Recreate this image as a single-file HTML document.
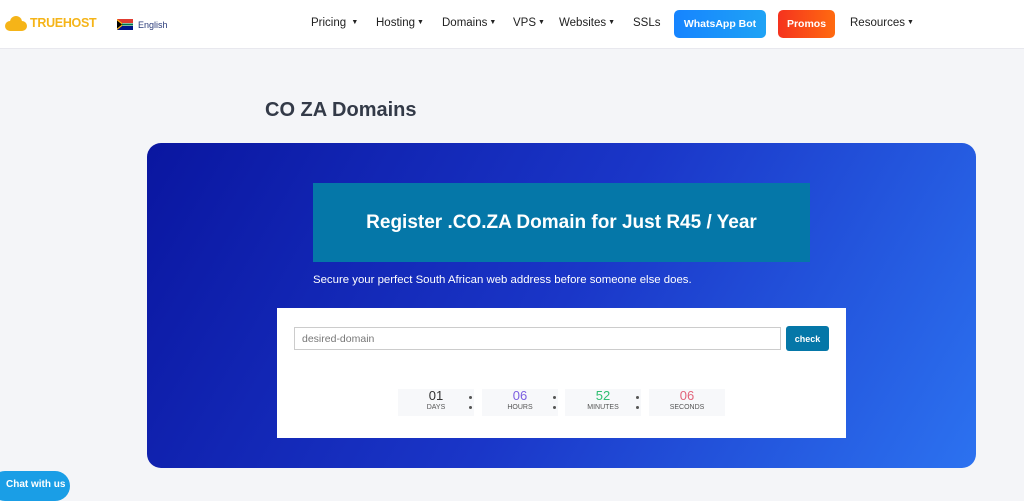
<!DOCTYPE html>
<html><head><meta charset="utf-8"><style>
*{margin:0;padding:0;box-sizing:border-box}
body{width:1024px;height:489px;overflow:hidden;background:#f4f5f8;font-family:"Liberation Sans",sans-serif;position:relative}
.nav{position:absolute;left:0;top:0;width:1024px;height:49px;background:#fff;border-bottom:1px solid #e8e8ee}
.logo{position:absolute;left:5px;top:15px;display:flex;align-items:center}
.cloud{width:22px;height:16px;position:relative;margin-right:3px}
.cloud i{position:absolute;background:#f5b418;border-radius:50%}
.logo b{color:#f5b418;font-size:12.5px;font-weight:700;letter-spacing:-0.3px}
.lang{position:absolute;left:117px;top:19px;display:flex;align-items:center;font-size:9px;color:#2a3b7a}
.menu{position:absolute;top:16px;font-size:11.5px;line-height:14px;color:#222}
.menu small{font-size:7px;vertical-align:2px;margin-left:2px}
.btn{position:absolute;top:10px;height:28px;border-radius:5px;color:#fff;font-size:10.5px;font-weight:700;display:flex;align-items:center;justify-content:center}
h1{position:absolute;left:265px;top:99px;font-size:20px;font-weight:700;color:#333a48}
.hero{position:absolute;left:147px;top:143px;width:829px;height:325px;border-radius:14px;background:linear-gradient(120deg,#0a16a0 0%,#1a36c8 50%,#2c72f0 100%)}
.banner{position:absolute;left:166px;top:40px;width:497px;height:79px;background:#0577a8;color:#fff;font-size:19px;font-weight:700;display:flex;align-items:center;justify-content:center}
.sub{position:absolute;left:166px;top:131px;font-size:11.4px;color:#fff}
.box{position:absolute;left:130px;top:165px;width:569px;height:130px;background:#fff}
.inp{position:absolute;left:17px;top:19px;width:487px;height:23px;border:1px solid #ccc;font-size:10.5px;color:#777;padding:5px 7px}
.chk{position:absolute;left:509px;top:18px;width:43px;height:25px;background:#0577a8;border-radius:3px;color:#fff;font-size:9px;font-weight:700;display:flex;align-items:center;justify-content:center}
.cd{position:absolute;top:81px;width:76px;height:27px;background:#f7f8fa;text-align:center}
.cd .n{font-size:13px;line-height:14px}
.cd .l{font-size:7px;color:#555;margin-top:1px}
.dot{position:absolute;width:3px;height:3px;border-radius:50%;background:#555}
.chat{position:absolute;left:-10px;top:471px;width:80px;height:30px;border-radius:15px;background:#1a9ee6;color:#fff;font-size:10px;font-weight:700;padding:8px 0 0 16px}
</style></head><body>
<div class="nav">
 <div class="logo"><div class="cloud"><i style="left:0;top:6px;width:10px;height:10px"></i><i style="left:5px;top:1px;width:12px;height:12px"></i><i style="left:12px;top:6px;width:10px;height:10px"></i><i style="left:4px;top:8px;width:14px;height:8px;border-radius:2px"></i></div><b>TRUEHOST</b></div>
 <div class="lang"><svg width="16" height="11" viewBox="0 0 16 11"><rect width="16" height="11" fill="#fff"/><rect width="16" height="4" fill="#e03c31"/><rect y="7" width="16" height="4" fill="#001489"/><path d="M0 0L7 5.5L0 11Z" fill="#ffb612"/><path d="M0 1.5L5 5.5L0 9.5Z" fill="#000"/><rect x="5" y="4.5" width="11" height="2" fill="#007749"/></svg><span style="margin-left:5px">English</span></div>
 <div class="menu" style="left:311px">Pricing <small>▼</small></div>
 <div class="menu" style="left:376px">Hosting<small>▼</small></div>
 <div class="menu" style="left:442px">Domains<small>▼</small></div>
 <div class="menu" style="left:513px">VPS<small>▼</small></div>
 <div class="menu" style="left:559px">Websites<small>▼</small></div>
 <div class="menu" style="left:633px">SSLs</div>
 <div class="btn" style="left:674px;width:92px;background:linear-gradient(90deg,#1684ff,#1fa3f5)">WhatsApp Bot</div>
 <div class="btn" style="left:778px;width:57px;background:linear-gradient(90deg,#f5331e,#ff6a10)">Promos</div>
 <div class="menu" style="left:850px">Resources<small>▼</small></div>
</div>
<h1>CO ZA Domains</h1>
<div class="hero">
 <div class="banner">Register .CO.ZA Domain for Just R45 / Year</div>
 <div class="sub">Secure your perfect South African web address before someone else does.</div>
 <div class="box">
  <div class="inp">desired-domain</div>
  <div class="chk">check</div>
  <div class="cd" style="left:121px"><div class="n" style="color:#333">01</div><div class="l">DAYS</div></div>
  <div class="cd" style="left:205px"><div class="n" style="color:#7b5ee0">06</div><div class="l">HOURS</div></div>
  <div class="cd" style="left:288px"><div class="n" style="color:#2fbf71">52</div><div class="l">MINUTES</div></div>
  <div class="cd" style="left:372px"><div class="n" style="color:#e2647a">06</div><div class="l">SECONDS</div></div>
  <div class="dot" style="left:192px;top:88px"></div><div class="dot" style="left:192px;top:98px"></div>
  <div class="dot" style="left:276px;top:88px"></div><div class="dot" style="left:276px;top:98px"></div>
  <div class="dot" style="left:359px;top:88px"></div><div class="dot" style="left:359px;top:98px"></div>
 </div>
</div>
<div class="chat">Chat with us</div>
</body></html>
